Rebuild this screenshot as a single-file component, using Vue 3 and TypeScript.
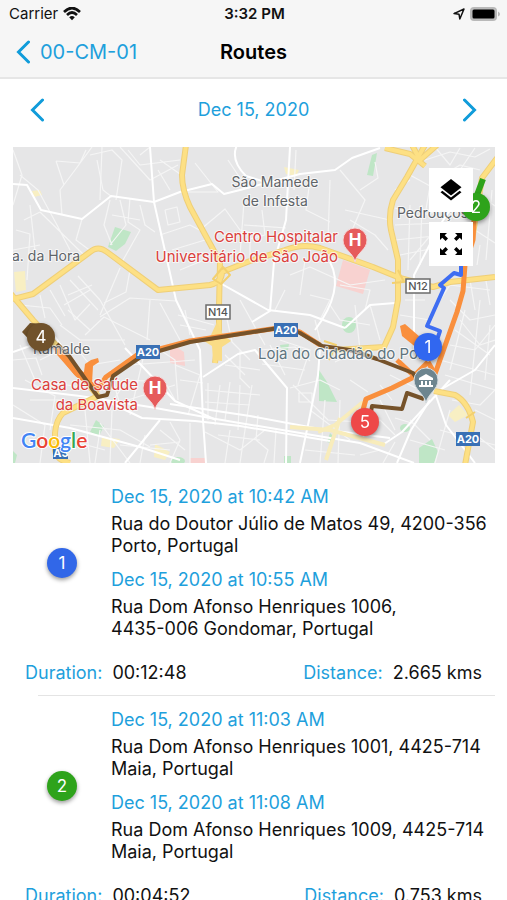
<script setup lang="ts">
interface Stop {
  time: string
  address: string
}

interface Route {
  id: number
  color: string
  stops: Stop[]
  duration: string
  distance: string
}

interface Marker {
  label: string
  x: number
  y: number
  color: string
}

interface Shield {
  text: string
  x: number
  y: number
  kind: 'national' | 'motorway'
}

const routes: Route[] = [
  {
    id: 1,
    color: '#3167e8',
    stops: [
      { time: 'Dec 15, 2020 at 10:42 AM', address: 'Rua do Doutor Júlio de Matos 49, 4200-356\nPorto, Portugal' },
      { time: 'Dec 15, 2020 at 10:55 AM', address: 'Rua Dom Afonso Henriques 1006,\n4435-006 Gondomar, Portugal' },
    ],
    duration: '00:12:48',
    distance: '2.665 kms',
  },
  {
    id: 2,
    color: '#2ea31b',
    stops: [
      { time: 'Dec 15, 2020 at 11:03 AM', address: 'Rua Dom Afonso Henriques 1001, 4425-714\nMaia, Portugal' },
      { time: 'Dec 15, 2020 at 11:08 AM', address: 'Rua Dom Afonso Henriques 1009, 4425-714\nMaia, Portugal' },
    ],
    duration: '00:04:52',
    distance: '0.753 kms',
  },
]

const markers: Marker[] = [
  { label: '4', x: 41, y: 337, color: '#70522b' },
  { label: '2', x: 476, y: 207, color: '#2ea31b' },
  { label: '1', x: 428, y: 347, color: '#3167f0' },
  { label: '5', x: 365, y: 422, color: '#ee4848' },
]

const shields: Shield[] = [
  { text: 'N14', x: 218, y: 312, kind: 'national' },
  { text: 'N12', x: 418, y: 286, kind: 'national' },
  { text: 'A20', x: 148, y: 352, kind: 'motorway' },
  { text: 'A20', x: 286, y: 330, kind: 'motorway' },
  { text: 'A20', x: 468, y: 439, kind: 'motorway' },
]

const hospitals = [
  { x: 355, y: 241 },
  { x: 155, y: 389 },
]

const yellowRoads: string[] = [
  'M13 299L33 294L90 252Q98 245 107 252L158 290L210 285Q222 282 222 272L250 261L285 250Q303 243 320 248L373 267L400 278L433 287L450 282L495 277',
  'M11 294L33 320L57 346L87 383L98 396L63 413Q56 420 55 433V450Q56 460 70 463',
  'M186 145L182 175Q182 190 190 207L220 262L219 307V330L215 363',
  'M425 145L407 177L393 200Q388 215 391 230L398 260V300L393 327L384 347L335 350',
  'M385 148L410 154L425 166M412 145L420 160L437 145',
  'M497 158L482 178L472 240',
  'M434 391L455 395Q468 402 473 422L465 465',
]

const mainStreets: string[] = [
  'M13 184L27 185L41 210L82 219L111 196L154 202L180 192L212 184L224 194L240 190L300 174L335 170L352 158L380 148',
  'M150 147L154 202L176 300L200 350L203 420L206 463',
  'M237 145Q230 160 246 176L272 184L290 180',
  'M290 147L286 220L274 262L270 311L252 322',
  'M220 283L268 310L310 315L345 328',
  'M330 262Q345 290 315 330',
  'M460 195L440 225L414 275V350',
  'M345 328L370 305L395 303M170 404L250 416L320 429L390 438',
  'M13 388L80 396L150 407L210 418L360 443L414 463',
  'M98 397L142 418L195 421L240 426L330 441',
  'M203 377L238 354L255 350L287 388L286 463',
  'M320 348L318 375L309 420L300 463',
  'M430 400L411 430L397 463M440 390L475 370L495 345',
  'M434 390L446 425L475 463M384 444L402 432L450 380',
  'M125 348L175 401L216 420M13 352L55 337L98 397',
  'M13 418L70 428L140 447L180 460M160 420L125 463',
]

const minorStreets: string[] = [
  'M56 161L80 163L86 150M56 161L64 185M92 147L75 170L60 190L62 215M90 155L112 150L122 160L116 200M97 160L103 190L112 197M120 147L150 180L178 165',
  'M128 150L140 165L180 160M160 160L180 174M158 170L170 190M140 155L150 147M102 147L100 200',
  'M20 175L38 190L57 225L70 250M24 220L40 212M30 205L36 260M40 212L84 255M16 230L30 234L27 280M82 219L76 240L92 252',
  'M110 200L104 225L112 245M120 200L126 225L110 245M130 198L128 222L140 230L122 262M140 205L145 225L155 232M112 215L140 220',
  'M165 210L177 207L180 222L168 225L165 210M160 235L190 225L205 233M172 250L205 240M180 270L204 260',
  'M60 285L75 320L90 304M70 280L98 310M78 276L100 300M68 295L92 285M64 305L90 290M120 268L100 315M130 270L126 292L104 303',
  'M20 305L50 308L62 325M40 295L45 318M50 290L65 316M100 317L130 298L176 301M85 335L104 317L150 340',
  'M195 163L218 192L188 192M200 230L225 209L240 230L263 236M244 202L240 255M262 210L265 235L246 240M244 225L286 228M250 236V255M228 160L240 178',
  'M296 150L294 190M310 180L306 210L330 222M305 205L285 205M330 180L328 240M340 170L365 200L350 235M360 190L378 178L375 162M345 210L390 220M350 220L375 235L388 250',
  'M225 310L232 342L250 360M240 300L265 345M185 310L190 335M178 315L214 325M180 325L206 330M240 350L240 378L250 388M225 355L245 375',
  'M410 175L430 186L425 215M395 208L418 216L440 211M395 225L437 223M395 240L435 236M400 255L435 248M410 205L408 270M422 205L420 265M435 230L410 260M395 190L410 180M435 180L460 165L480 170',
  'M410 147L425 160L450 152L475 157L490 149M435 147L450 165L460 148M460 170L475 148M480 195L495 206M475 230L495 243M480 245L477 265M492 190L486 260',
  'M340 285L370 290L365 310M310 295L330 300L320 320M290 275L310 267L350 285L385 280M305 260L300 295M285 290L275 310',
  'M130 365L195 360M145 350L130 415M125 380L165 382L175 400M160 350L175 360L178 400M110 370L120 405M110 405L127 380M128 400L175 385',
  'M175 365L200 375L188 415M180 380L203 383M208 383V420M220 385L215 425M230 382L225 420M240 385L238 430M252 385L245 430M205 390L260 395M205 402L250 405M225 365L260 370',
  'M260 350L295 347L310 361M270 345L285 375M280 340L310 350L298 385M262 364L305 370M290 388L320 380L340 390M298 393L312 393V402H299V393M293 385L328 420L360 422',
  'M230 430L225 463M245 430L240 463M258 415L256 440L268 450L264 463M276 430L274 463M218 435L260 440M205 432L240 450L265 430M190 423V463M170 422L180 440L170 463',
  'M310 410L350 440M325 400L320 463M340 400L338 463M350 380L368 392M305 450L355 455M360 440L380 420L395 435M380 385L392 400M335 362L350 355',
  'M330 305L340 320L370 325M355 305L360 350M370 305L380 340M315 320L320 340M400 315L430 320M405 300L425 300M410 340L430 365',
  'M450 300L470 320L495 315M460 320L480 345L495 340M450 345L475 350L495 325M440 360L495 375M445 375L495 390M465 310L450 370M480 300L470 395M490 325L485 380',
  'M440 300L450 285L490 290M470 280L475 310M485 275L490 305M455 330L490 355M452 400L480 405L495 390M470 430L495 450M440 430L495 445M450 410L435 463M475 410L495 420M410 440L445 450',
  'M380 400L395 430M395 418L415 424M360 455L380 450M383 463L395 442M410 420L430 440M390 375L420 390',
  'M13 360L36 358L42 375M20 345L35 380L80 387M25 380L55 396L50 430M40 360L60 350M30 400L65 400M13 405L45 425L40 463M78 350L90 365L120 360',
  'M70 425L120 430L150 447M85 410L90 463M100 430L95 463M112 410L110 463M68 440L105 450M100 423L130 463M145 435L140 463M150 445L180 442M120 445L170 450M160 430L185 450',
  'M60 325L80 340L125 340M68 310L90 330M100 300L125 345M150 300L147 340M160 303L180 340M13 150L22 175L13 205M13 250L40 245',
]
</script>

<template>
  <div class="screen">
    <header class="top">
      <div class="status">
        <div class="status-side">
          <span class="carrier">Carrier</span>
          <svg class="wifi" viewBox="0 0 18 14" aria-hidden="true">
            <path d="M1 5Q9-3 17 5M4 8Q9 3 14 8" />
            <path class="wifi-dot" d="M6.200 10.200Q9 8 11.800 10.200L9 13.300Z" />
          </svg>
        </div>
        <span class="clock">3:32 PM</span>
        <div class="status-side status-end">
          <svg class="location" viewBox="0 0 12 12" aria-hidden="true">
            <path d="M1 5.600L11 1L6.800 11L6 6.200Z" />
          </svg>
          <svg class="battery" viewBox="0 0 30 14" aria-hidden="true">
            <rect class="battery-shell" x="0" y="0" width="27" height="14" rx="4" />
            <rect x="2.500" y="2.500" width="22" height="9" rx="1.500" />
            <path class="battery-tip" d="M28 4.500Q30 5.500 30 7T28 9.500Z" />
          </svg>
        </div>
      </div>
      <nav class="navbar">
        <a class="back" href="#">
          <svg class="chevron" viewBox="0 0 14 24" aria-hidden="true"><path d="M12.500 2L2.500 12L12.500 22" /></svg>
          <span>00-CM-01</span>
        </a>
        <h1>Routes</h1>
      </nav>
    </header>

    <main class="content">
      <div class="date-bar">
        <button type="button" class="step" aria-label="Previous day">
          <svg class="chevron" viewBox="0 0 14 24" aria-hidden="true"><path d="M12.500 2L2.500 12L12.500 22" /></svg>
        </button>
        <span class="date">Dec 15, 2020</span>
        <button type="button" class="step" aria-label="Next day">
          <svg class="chevron" viewBox="0 0 14 24" aria-hidden="true"><path d="M1.500 2L11.500 12L1.500 22" /></svg>
        </button>
      </div>

      <section class="map" aria-label="Map">
        <svg class="map-canvas" viewBox="13 147 482 316">
          <rect x="13" y="147" width="482" height="316" fill="#e6e6e7" />

          <g fill="#bfe6c6">
            <path d="M115 227L131 232L125 244L116 251L108 247Z" />
            <path d="M319 370L327 382L337 402L319 401Z" />
            <path d="M372 155L377 153L373 176L367 175Z" />
            <path d="M96 420L104 426L99 436L90 432Z" />
            <ellipse cx="349" cy="325" rx="7" ry="8" />
            <ellipse cx="405" cy="428" rx="5" ry="4" />
            <path d="M419 448L432 439L438 452L434 463H419Z" />
            <ellipse cx="178" cy="461" rx="7" ry="4" />
            <path d="M280 345L289 344L288 350L281 349Z" />
            <path d="M330 433L333 436L331 443L327 442Z" />
            <path d="M284 456H291V463H284Z" />
            <path d="M13 451L17 455L15 463H13Z" />
          </g>
          <g fill="#f8d2d0">
            <path d="M343 260L370 270L363 294L336 286Z" />
            <path d="M170 343L184 352L185 366L170 363Z" />
            <path d="M190 458H206V463H190Z" />
          </g>
          <g fill="#f8efc3">
            <path d="M14 272L25 271L26 290L16 292Z" />
            <path d="M32 191L40 190L42 195L34 197Z" />
            <path d="M284 167L299 170L296 176L286 174Z" />
            <path d="M102 437L120 439L114 448L101 446Z" />
            <path d="M155 444L170 452L165 460L154 457Z" />
            <path d="M448 415L459 405L468 415L455 422Z" />
          </g>

          <g class="line minor"><path v-for="d in minorStreets" :key="d" :d="d" /></g>
          <g class="line main"><path v-for="d in mainStreets" :key="d" :d="d" /></g>
          <g class="line pale">
            <path d="M363 402L335 425L318 432M290 427L330 430L385 445M340 418L326 460" />
          </g>
          <g class="line highway-edge"><path v-for="d in yellowRoads" :key="d" :d="d" /></g>
          <g class="line highway"><path v-for="d in yellowRoads" :key="d" :d="d" /></g>
          <path d="M217 322L211 335L204 341L212 346L213 360L222 361L222 347L231 341L222 333Z" fill="#fadc86" />
          <g class="line interchange">
            <path d="M223 267L230 275L221 284L213 279ZM324 341L336 345L329 360M466 418L475 412M398 270L404 282L392 283" />
          </g>

          <g class="line trip orange">
            <path d="M55 347L76 373L98 389L106 377L137 355L190 341L285 327L300 332L320 345" />
            <path d="M58 350L78 373L90 382" stroke-width="8" />
            <path d="M428 362L435 374" />
            <path d="M363 410L366 399L392 388L412 378L428 362M474 220L473 240L465 265L463 291L457 312L435 374M397 360L412 374L428 384" />
          </g>
          <g fill="#f98f3d">
            <path d="M83 380L85 364L91 360L98 358L99 362L93 366L92 383Z" />
            <path d="M400 326L405 324L420 337L418 349L402 336Z" />
          </g>
          <g class="line trip brown">
            <path d="M57 344L69 356L98 397L107 395L113 376L142 356L190 342L285 327L300 333L322 346L350 350L377 359L413 373L422 386" />
            <path d="M371 412L372 406L402 409L407 393L424 399" />
          </g>
          <path class="line trip blue" d="M461 263V275L454 273L440 285L444 288L427 326L440 331L437 340" />
          <path class="line trip green" d="M483 179L477 195" />

          <g class="place">
            <text x="275" y="187" text-anchor="middle">São Mamede</text>
            <text x="275" y="206" text-anchor="middle">de Infesta</text>
            <text x="12" y="261">a. da Hora</text>
            <text x="397" y="218">Pedrouços</text>
            <text x="33" y="354">Ramalde</text>
            <text class="civic" x="258" y="359">Loja do Cidadão do Porto</text>
          </g>
          <g class="place hospital" text-anchor="end">
            <text x="338" y="242">Centro Hospitalar</text>
            <text x="338" y="262">Universitário de São João</text>
            <text x="138" y="390">Casa de Saúde</text>
            <text x="138" y="410">da Boavista</text>
          </g>

          <g v-for="h in hospitals" :key="h.x" :transform="`translate(${h.x} ${h.y})`">
            <path d="M0 21C-2 11-12 9-12-1A12 12 0 0 1 12-1C12 9 2 11 0 21Z" fill="#e65b5b" stroke="#f5d8d8" />
            <text class="pin-text" y="5" text-anchor="middle">H</text>
          </g>

          <g transform="translate(426 381)">
            <path d="M0 22C-2 12-12 9-12-1A12 12 0 0 1 12-1C12 9 2 12 0 22Z" fill="#6d858f" stroke="#d5dcdf" />
            <path d="M-7-3L0-7L7-3V-1H-7ZM-5 0H-3V4H-5ZM-1 0H1V4H-1ZM3 0H5V4H3ZM-7 4H7V6H-7Z" fill="#fff" />
          </g>

          <g transform="translate(61 453)">
            <rect x="-8" y="-6" width="15" height="12" fill="#3970b5" />
            <text class="shield-text motorway" y="4" text-anchor="middle">A3</text>
          </g>
          <g v-for="s in shields" :key="`${s.text}-${s.x}`" :transform="`translate(${s.x} ${s.y})`">
            <rect :class="s.kind" x="-12" y="-7" width="24" height="14" />
            <text :class="['shield-text', s.kind]" y="4" text-anchor="middle">{{ s.text }}</text>
          </g>

          <path d="M22 332L30 323L45 324L52 343L36 347Z" fill="#70522b" />
          <g v-for="m in markers" :key="m.label" class="marker" :transform="`translate(${m.x} ${m.y})`">
            <circle r="14" :fill="m.color" />
            <text y="6" text-anchor="middle">{{ m.label }}</text>
          </g>

          <text class="google" x="21" y="448">
            <tspan fill="#4285f4">G</tspan><tspan fill="#ea4335">o</tspan><tspan fill="#fbbc05">o</tspan><tspan fill="#4285f4">g</tspan><tspan fill="#34a853">l</tspan><tspan fill="#ea4335">e</tspan>
          </text>
        </svg>

        <div class="map-tools">
          <button type="button" aria-label="Map layers">
            <svg viewBox="0 0 24 24" aria-hidden="true">
              <path d="M12 1L22.500 9.200L12 17.400L1.500 9.200Z" />
              <path d="M1.500 14.200L3.400 12.700L12 19.400L20.600 12.700L22.500 14.200L12 22.500Z" />
            </svg>
          </button>
          <button type="button" aria-label="Full screen">
            <svg viewBox="0 0 24 24" aria-hidden="true">
              <path d="M1 1H8L5.700 3.300L9 6.600L6.600 9L3.300 5.700L1 8Z" />
              <path d="M23 1V8L20.700 5.700L17.400 9L15 6.600L18.300 3.300L16 1Z" />
              <path d="M1 23V16L3.300 18.300L6.600 15L9 17.400L5.700 20.700L8 23Z" />
              <path d="M23 23H16L18.300 20.700L15 17.400L17.400 15L20.700 18.300L23 16Z" />
            </svg>
          </button>
        </div>
      </section>

      <ul class="routes">
        <li v-for="route in routes" :key="route.id" class="route">
          <div class="route-body">
            <span class="badge" :style="{ backgroundColor: route.color }">{{ route.id }}</span>
            <div class="stops">
              <div v-for="stop in route.stops" :key="stop.time" class="stop">
                <time>{{ stop.time }}</time>
                <p>{{ stop.address }}</p>
              </div>
            </div>
          </div>
          <dl class="totals">
            <div>
              <dt>Duration:</dt>
              <dd>{{ route.duration }}</dd>
            </div>
            <div>
              <dt>Distance:</dt>
              <dd>{{ route.distance }}</dd>
            </div>
          </dl>
        </li>
      </ul>
    </main>
  </div>
</template>

<style>
body {
  margin: 0;
  background: #fff;
}
</style>

<style scoped>
.screen {
  display: flex;
  flex-direction: column;
  height: 100vh;
  overflow: hidden;
  background: #fff;
  color: #111;
  font-family: Inter, Roboto, "Liberation Sans", sans-serif;
  font-size: 18px;
  line-height: 22px;
}

.top {
  flex: none;
  background: #f6f6f6;
  border-bottom: 2px solid #e6e6e6;
}

.status {
  display: grid;
  grid-template-columns: 1fr auto 1fr;
  align-items: center;
  height: 27px;
  padding: 0 7px 0 9px;
  font-size: 15px;
}

.status-side {
  display: flex;
  align-items: center;
  gap: 5px;
}

.status-end {
  justify-content: flex-end;
}

.clock {
  font-weight: 600;
}

.wifi {
  width: 18px;
  height: 14px;
  fill: none;
  stroke: #111;
  stroke-width: 2.6;
}

.wifi .wifi-dot {
  fill: #111;
  stroke: none;
}

.location {
  width: 12px;
  height: 12px;
  fill: none;
  stroke: #111;
  stroke-width: 1.5;
  stroke-linejoin: round;
}

.battery {
  width: 30px;
  height: 14px;
}

.battery-shell,
.battery-tip {
  fill: #b9b9b9;
}

.navbar {
  display: grid;
  grid-template-columns: 1fr auto 1fr;
  align-items: center;
  height: 50px;
  padding: 0 16px;
}

.back {
  display: flex;
  align-items: center;
  gap: 10px;
  color: #1ea0dc;
  font-size: 20px;
  text-decoration: none;
}

h1 {
  margin: 0;
  color: #000;
  font-size: 20px;
  font-weight: 600;
}

.chevron {
  display: block;
  width: 14px;
  height: 24px;
  fill: none;
  stroke: #109cda;
  stroke-width: 3;
  stroke-linecap: round;
}

.content {
  flex: 1;
  min-height: 0;
  overflow-y: auto;
  scrollbar-width: none;
}

.date-bar {
  display: flex;
  align-items: center;
  justify-content: space-between;
  height: 62px;
  padding: 0 20px;
}

.date {
  color: #1ea0dc;
}

.step {
  display: grid;
  place-items: center;
  width: 34px;
  height: 44px;
  padding: 0;
  border: 0;
  background: none;
}

.map {
  position: relative;
  margin: 6px 12px 10px 13px;
}

.map-canvas {
  display: block;
  width: 100%;
  height: auto;
}

.line {
  fill: none;
  stroke-linejoin: round;
}

.minor {
  stroke: #f5f5f5;
  stroke-width: 1.2;
}

.main {
  stroke: #fff;
  stroke-width: 2;
}

.pale {
  stroke: #f8ecbb;
  stroke-width: 4;
}

.highway-edge {
  stroke: #efcf78;
  stroke-width: 6;
}

.highway {
  stroke: #fde084;
  stroke-width: 4;
}

.interchange {
  stroke: #f3d06f;
  stroke-width: 2;
}

.trip {
  stroke-width: 5;
}

.orange {
  stroke: #f98f3d;
}

.brown {
  stroke: #75522a;
  stroke-width: 4;
}

.blue {
  stroke: #3e6df2;
  stroke-width: 4;
}

.green {
  stroke: #2ea31b;
  stroke-width: 6;
}

.place text {
  fill: #5f6468;
  stroke: #fff;
  stroke-opacity: 0.7;
  stroke-width: 2px;
  stroke-linejoin: round;
  paint-order: stroke;
  font-size: 14px;
}

.place .civic {
  fill: #60747e;
  font-size: 15px;
}

.hospital text {
  fill: #db3f3c;
  font-size: 15px;
}

.pin-text {
  fill: #fff;
  font-size: 17px;
  font-weight: 700;
}

rect.national {
  fill: #fff;
  stroke: #6b6b6b;
  stroke-width: 1.5;
}

rect.motorway {
  fill: #3970b5;
}

.shield-text {
  font-size: 11px;
  font-weight: 700;
}

.shield-text.national {
  fill: #555;
  font-weight: 500;
}

.shield-text.motorway {
  fill: #fff;
}

.marker {
  filter: drop-shadow(0 2px 2px rgb(0 0 0 / 40%));
}

.marker text {
  fill: #fff;
  font-size: 17px;
}

.google {
  stroke: #fff;
  stroke-width: 2px;
  paint-order: stroke;
  font-family: Lato, "Open Sans", sans-serif;
  font-size: 21px;
  font-weight: 600;
}

.map-tools {
  position: absolute;
  top: 21px;
  right: 22px;
  display: grid;
  gap: 10px;
}

.map-tools button {
  display: grid;
  place-items: center;
  width: 44px;
  height: 44px;
  padding: 0;
  border: 0;
  background: #fff;
}

.map-tools svg {
  width: 24px;
  height: 24px;
  fill: #000;
}

.routes {
  margin: 0;
  padding: 0 12px 0 13px;
  list-style: none;
}

.route {
  padding: 13px 0 11px;
  background: linear-gradient(#e4e4e4, #e4e4e4) 25px 100% / 100% 1px no-repeat;
}

.route-body {
  display: grid;
  grid-template-columns: 98px 1fr;
  align-items: center;
}

.badge {
  display: grid;
  place-items: center;
  justify-self: center;
  width: 30px;
  height: 30px;
  border-radius: 50%;
  box-shadow: 0 2px 4px rgb(0 0 0 / 40%);
  color: #fff;
  font-size: 17px;
}

.stops {
  display: grid;
  gap: 12px;
}

.stop {
  display: grid;
  gap: 5px;
}

.stop time {
  color: #1ea0dc;
}

.stop p {
  margin: 0;
  white-space: pre-line;
}

.totals {
  display: flex;
  justify-content: space-between;
  margin: 22px 0 0;
  padding: 0 13px 1px 12px;
}

.totals div {
  display: flex;
  gap: 10px;
}

.totals dt {
  color: #1ea0dc;
}

.totals dd {
  margin: 0;
}
</style>
